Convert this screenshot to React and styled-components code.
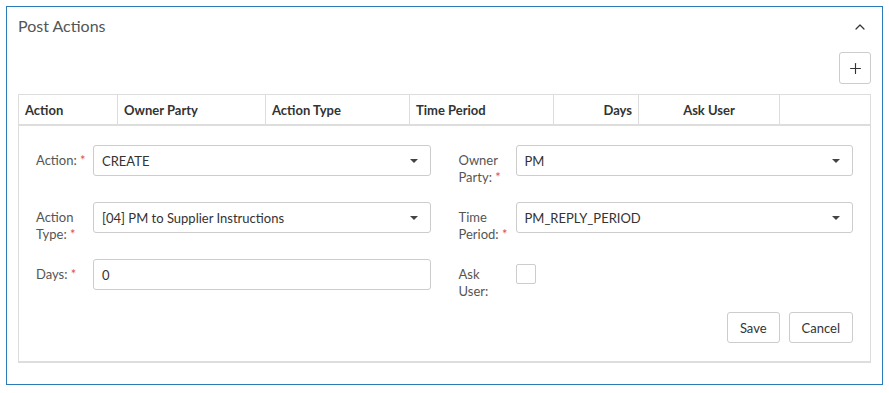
import styled, { createGlobalStyle } from "styled-components";
import { ChevronUp, Plus } from "lucide-react";

const GlobalStyle = createGlobalStyle`
  body {
    margin: 0;
    background: #fff;
    font-family: "Lato", "Open Sans", sans-serif;
    font-size: 13px;
    color: #333;
  }
  * { box-sizing: border-box; }
`;

const Page = styled.div`
  padding: 6px 0 0 6px;
`;

const Panel = styled.section`
  width: 877px;
  height: 379px;
  border: 1px solid #2c7bb9;
  padding: 0 11px;
`;

const PanelHeader = styled.div`
  display: flex;
  align-items: center;
  justify-content: space-between;
  height: 37px;
`;

const Title = styled.h3`
  margin: 0;
  font-size: 16px;
  font-weight: 400;
  color: #555;
`;

const CollapseButton = styled.button`
  border: none;
  background: none;
  padding: 0;
  margin: 2px 3px 0 0;
  color: #333;
  display: flex;
  cursor: pointer;
`;

const Toolbar = styled.div`
  display: flex;
  justify-content: flex-end;
  margin-top: 8px;
  margin-bottom: 10px;
`;

const IconButton = styled.button`
  width: 32px;
  height: 32px;
  border: 1px solid #ccc;
  border-radius: 3px;
  background: #fff;
  color: #333;
  display: flex;
  align-items: center;
  justify-content: center;
  padding: 0;
`;

const HeaderRow = styled.div`
  display: grid;
  grid-template-columns: 99px 148px 144px 144px 85px 141px 1fr;
  height: 32px;
  border: 1px solid #ddd;
  border-bottom: 2px solid #ddd;
`;

const HeaderCell = styled.div`
  display: flex;
  align-items: center;
  justify-content: ${({ $align }) =>
    $align === "right" ? "flex-end" : $align === "center" ? "center" : "flex-start"};
  padding: 0 6px;
  font-weight: 700;
  color: #333;
  border-right: 1px solid #ddd;
  &:last-child { border-right: none; }
`;

const FormBox = styled.div`
  border: 1px solid #ddd;
  border-top: none;
  border-bottom: 2px solid #ddd;
  padding: 19px 17px 18px;
`;

const FieldGrid = styled.div`
  display: grid;
  grid-template-columns: 1fr 1fr;
  column-gap: 28px;
  row-gap: 16px;
`;

const Field = styled.div`
  display: flex;
  align-items: flex-start;
`;

const Label = styled.label`
  width: 57px;
  flex: none;
  padding: 7px 4px 0 0;
  line-height: 17px;
  color: #555;
`;

const Req = styled.span`
  color: #d9534f;
`;

const Select = styled.div`
  flex: 1;
  height: 31px;
  border: 1px solid #ccc;
  border-radius: 3px;
  display: flex;
  align-items: center;
  justify-content: space-between;
  padding: 0 12px 0 8px;
  color: #333;

  &::after {
    content: "";
    border-top: 4px solid #444;
    border-left: 4px solid transparent;
    border-right: 4px solid transparent;
  }
`;

const Input = styled.input`
  flex: 1;
  height: 31px;
  border: 1px solid #ccc;
  border-radius: 3px;
  padding: 0 8px;
  font: inherit;
  color: #333;
`;

const Check = styled.span`
  width: 20px;
  height: 20px;
  margin-top: 5px;
  border: 1px solid #ccc;
  border-radius: 2px;
  background: #fff;
`;

const Actions = styled.div`
  display: flex;
  justify-content: flex-end;
  gap: 9px;
  margin-top: 12px;
`;

const Button = styled.button`
  height: 31px;
  padding: 0 12px;
  border: 1px solid #ccc;
  border-radius: 3px;
  background: #fff;
  font: inherit;
  color: #333;
`;

const columns = [
  { name: "Action" },
  { name: "Owner Party" },
  { name: "Action Type" },
  { name: "Time Period" },
  { name: "Days", align: "right" },
  { name: "Ask User", align: "center" },
  { name: "" },
];

function FieldLabel({ text, required }) {
  return (
    <Label>
      {text} {required && <Req>*</Req>}
    </Label>
  );
}

export default function App() {
  return (
    <Page>
      <GlobalStyle />
      <Panel>
        <PanelHeader>
          <Title>Post Actions</Title>
          <CollapseButton aria-label="collapse">
            <ChevronUp size={16} strokeWidth={1.8} />
          </CollapseButton>
        </PanelHeader>

        <Toolbar>
          <IconButton aria-label="add">
            <Plus size={17} strokeWidth={1.6} />
          </IconButton>
        </Toolbar>

        <HeaderRow>
          {columns.map((c, i) => (
            <HeaderCell key={i} $align={c.align}>{c.name}</HeaderCell>
          ))}
        </HeaderRow>

        <FormBox>
          <FieldGrid>
            <Field>
              <FieldLabel text="Action:" required />
              <Select>CREATE</Select>
            </Field>
            <Field>
              <FieldLabel text="Owner Party:" required />
              <Select>PM</Select>
            </Field>
            <Field>
              <FieldLabel text="Action Type:" required />
              <Select>[04] PM to Supplier Instructions</Select>
            </Field>
            <Field>
              <FieldLabel text="Time Period:" required />
              <Select>PM_REPLY_PERIOD</Select>
            </Field>
            <Field>
              <FieldLabel text="Days:" required />
              <Input defaultValue="0" />
            </Field>
            <Field>
              <FieldLabel text="Ask User:" />
              <Check />
            </Field>
          </FieldGrid>
          <Actions>
            <Button>Save</Button>
            <Button>Cancel</Button>
          </Actions>
        </FormBox>
      </Panel>
    </Page>
  );
}
